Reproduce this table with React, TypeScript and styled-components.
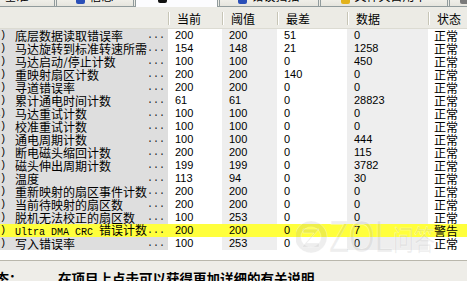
import React from "react";
import styled, { createGlobalStyle, css } from "styled-components";

const CJK = `"Noto Sans CJK SC", "Noto Sans", sans-serif`;
const NUM = `"Liberation Sans", Arial, sans-serif`;
const MONO = `"Liberation Mono", "DejaVu Sans Mono", monospace`;

const GlobalStyle = createGlobalStyle`
  html, body { margin: 0; padding: 0; background: #ffffff; overflow: hidden; }
  body { width: 467px; height: 281px; }
`;

const Viewport = styled.div`
  width: 467px;
  height: 281px;
  overflow: hidden;
`;

const Window = styled.div`
  position: relative;
  margin: -12px 0 0 -24px;
  width: 491px;
  height: 293px;
  display: flex;
  flex-direction: column;
  background: #ffffff;
`;

const TabBar = styled.div`
  display: flex;
  align-items: flex-end;
  gap: 1px;
  height: 18px;
  padding-left: 2px;
  background: #ecebe5;
`;

const Tab = styled.div<{ $w: number; $active?: boolean }>`
  box-sizing: border-box;
  flex: none;
  width: ${(p) => p.$w}px;
  height: 18px;
  display: flex;
  align-items: flex-start;
  justify-content: center;
  gap: 4px;
  border: 1px solid #919b9c;
  border-bottom: none;
  border-radius: 3px 3px 0 0;
  background: linear-gradient(#ffffff, #f1f0ea 60%, #e6e5de);
  font: 12px/14px ${CJK};
  color: #000;
  padding-top: 0;
  ${(p) =>
    p.$active &&
    css`
      height: 20px;
      margin-bottom: -1px;
      position: relative;
      z-index: 1;
      background: #fcfcfe;
      & > span:last-child {
        visibility: hidden;
      }
    `}
`;

const TabIcon = styled.span<{ $c: string }>`
  display: inline-block;
  width: 9px;
  height: 15px;
  border-radius: 2px;
  background: ${(p) => p.$c};
`;

const Strip = styled.div`
  height: 2px;
  border-top: 1px solid #919b9c;
  background: #ecebe5;
`;

const Header = styled.div`
  box-sizing: border-box;
  display: flex;
  height: 20px;
  background: #ecebe5;
  border-bottom: 1px solid #dcdbd2;
`;

const HeaderCell = styled.div<{ $w: number; $first?: boolean }>`
  position: relative;
  box-sizing: border-box;
  flex: none;
  width: ${(p) => p.$w}px;
  padding-left: 9px;
  font: 12px/19px ${CJK};
  color: #000;
  ${(p) =>
    !p.$first &&
    css`
      &::before {
        content: "";
        position: absolute;
        left: 0;
        top: 3px;
        bottom: 3px;
        width: 1px;
        background: #c7c5b6;
        box-shadow: 1px 0 0 #ffffff;
      }
    `}
`;

const Rows = styled.div`
  flex: 1;
  display: flex;
  flex-direction: column;
  background: #ffffff;
`;

const Row = styled.div<{ $warn?: boolean }>`
  display: flex;
  height: 13px;
  background: ${(p) => (p.$warn ? "#ffff3c" : "transparent")};
`;

type Tone = "dark" | "light" | "none";
const toneColor: Record<Tone, string> = {
  dark: "#dedede",
  light: "#eeeeee",
  none: "transparent",
};

const NameCell = styled.div<{ $w: number; $tone: Tone }>`
  box-sizing: border-box;
  flex: none;
  width: ${(p) => p.$w}px;
  display: flex;
  align-items: center;
  padding: 0 3px 0 6px;
  background: ${(p) => toneColor[p.$tone]};
  overflow: hidden;
`;

const Id = styled.span`
  flex: none;
  width: 24px;
  margin-right: 9px;
  font: 10px/13px ${MONO};
  color: #000;
`;

const Name = styled.span`
  flex: 1;
  min-width: 0;
  overflow: hidden;
  white-space: nowrap;
  font: 12px/13px ${CJK};
  color: #000;
`;

const Latin = styled.span`
  font: 10px/13px ${MONO};
`;

const Dots = styled.span`
  flex: none;
  font: 10px/13px ${MONO};
  color: #222;
`;

const Cell = styled.div<{ $w: number; $tone: Tone; $cjk?: boolean }>`
  box-sizing: border-box;
  flex: none;
  width: ${(p) => p.$w}px;
  padding-left: ${(p) => (p.$cjk ? 6 : 7)}px;
  background: ${(p) => toneColor[p.$tone]};
  font: ${(p) => (p.$cjk ? `12px/13px ${CJK}` : `11px/13px ${NUM}`)};
  color: #000;
  white-space: nowrap;
  overflow: hidden;
`;

const StatusBar = styled.div`
  box-sizing: border-box;
  flex: none;
  height: 21px;
  display: flex;
  padding: 9px 0 0 6px;
  border-top: 1px solid #b9b7ac;
  background: #eeede8;
  font: bold 13.5px/16px ${CJK};
  color: #000;
  white-space: nowrap;
`;

const StatusLabel = styled.span`
  flex: none;
  width: 76px;
`;

const Watermark = styled.svg`
  position: absolute;
  left: 320px;
  top: 229px;
  pointer-events: none;
`;

const COLS = [192, 54, 55, 70, 81, 39];
const TONES: Tone[] = ["dark", "none", "light", "none", "light", "none"];

type Attr = {
  id: string;
  name: React.ReactNode;
  cur: string;
  thr: string;
  worst: string;
  data: string;
  status: string;
  warn?: boolean;
};

const ROWS: Attr[] = [
  { id: "(01)", name: "底层数据读取错误率", cur: "200", thr: "200", worst: "51", data: "0", status: "正常" },
  { id: "(03)", name: "马达旋转到标准转速所需时间", cur: "154", thr: "148", worst: "21", data: "1258", status: "正常" },
  { id: "(04)", name: "马达启动/停止计数", cur: "100", thr: "100", worst: "0", data: "450", status: "正常" },
  { id: "(05)", name: "重映射扇区计数", cur: "200", thr: "200", worst: "140", data: "0", status: "正常" },
  { id: "(07)", name: "寻道错误率", cur: "200", thr: "200", worst: "0", data: "0", status: "正常" },
  { id: "(09)", name: "累计通电时间计数", cur: "61", thr: "61", worst: "0", data: "28823", status: "正常" },
  { id: "(0A)", name: "马达重试计数", cur: "100", thr: "100", worst: "0", data: "0", status: "正常" },
  { id: "(0B)", name: "校准重试计数", cur: "100", thr: "100", worst: "0", data: "0", status: "正常" },
  { id: "(0C)", name: "通电周期计数", cur: "100", thr: "100", worst: "0", data: "444", status: "正常" },
  { id: "(C0)", name: "断电磁头缩回计数", cur: "200", thr: "200", worst: "0", data: "115", status: "正常" },
  { id: "(C1)", name: "磁头伸出周期计数", cur: "199", thr: "199", worst: "0", data: "3782", status: "正常" },
  { id: "(C2)", name: "温度", cur: "113", thr: "94", worst: "0", data: "30", status: "正常" },
  { id: "(C4)", name: "重新映射的扇区事件计数", cur: "200", thr: "200", worst: "0", data: "0", status: "正常" },
  { id: "(C5)", name: "当前待映射的扇区数", cur: "200", thr: "200", worst: "0", data: "0", status: "正常" },
  { id: "(C6)", name: "脱机无法校正的扇区数", cur: "100", thr: "253", worst: "0", data: "0", status: "正常" },
  {
    id: "(C7)",
    name: (
      <>
        <Latin>Ultra DMA CRC </Latin>错误计数
      </>
    ),
    cur: "200",
    thr: "200",
    worst: "0",
    data: "7",
    status: "警告",
    warn: true,
  },
  { id: "(C8)", name: "写入错误率", cur: "100", thr: "253", worst: "0", data: "0", status: "正常" },
];

const TABS = [
  { w: 77, label: "基准", icon: "" },
  { w: 78, label: "信息", icon: "#2a4fb8" },
  { w: 83, label: "健康", icon: "#111111", active: true },
  { w: 100, label: "错误扫描", icon: "#2a4fb8" },
  { w: 128, label: "文件夹占用率", icon: "#e2b21c" },
  { w: 60, label: "磁盘", icon: "#7a7a7a" },
];

export default function App() {
  return (
    <Viewport>
      <GlobalStyle />
      <Window>
        <TabBar>
          {TABS.map((t) => (
            <Tab key={t.label} $w={t.w} $active={t.active}>
              {t.icon && <TabIcon $c={t.icon} />}
              <span>{t.label}</span>
            </Tab>
          ))}
        </TabBar>
        <Strip />
        <Header>
          <HeaderCell $w={COLS[0]} $first />
          <HeaderCell $w={COLS[1]}>当前</HeaderCell>
          <HeaderCell $w={COLS[2]}>阈值</HeaderCell>
          <HeaderCell $w={COLS[3]}>最差</HeaderCell>
          <HeaderCell $w={COLS[4]}>数据</HeaderCell>
          <HeaderCell $w={COLS[5]}>状态</HeaderCell>
        </Header>
        <Rows>
          {ROWS.map((r) => {
            const t = (i: number): Tone => (r.warn ? "none" : TONES[i]);
            return (
              <Row key={r.id} $warn={r.warn}>
                <NameCell $w={COLS[0]} $tone={t(0)}>
                  <Id>{r.id}</Id>
                  <Name>{r.name}</Name>
                  <Dots>...</Dots>
                </NameCell>
                <Cell $w={COLS[1]} $tone={t(1)}>{r.cur}</Cell>
                <Cell $w={COLS[2]} $tone={t(2)}>{r.thr}</Cell>
                <Cell $w={COLS[3]} $tone={t(3)}>{r.worst}</Cell>
                <Cell $w={COLS[4]} $tone={t(4)}>{r.data}</Cell>
                <Cell $w={COLS[5]} $tone={t(5)} $cjk>{r.status}</Cell>
              </Row>
            );
          })}
        </Rows>
        <StatusBar>
          <StatusLabel>状态：</StatusLabel>
          <span>在项目上点击可以获得更加详细的有关说明</span>
        </StatusBar>
        <Watermark width="140" height="42" viewBox="0 0 140 42">
          <g fill="rgba(150,150,150,0.16)" stroke="rgba(255,255,255,0.5)" strokeWidth="0.6">
            <path d="M15 4 a16 16 0 1 0 0.1 0 Z M15 10 a10 10 0 1 1 -0.1 0 Z" fillRule="evenodd" />
            <path d="M7 12 h16 l-12 14 h12 v4 h-17 l12 -14 h-11 Z" />
            <text x="33" y="35" fontFamily={NUM} fontSize="44" textLength="64" lengthAdjust="spacingAndGlyphs">
              ZOL
            </text>
            <text x="97" y="34" fontFamily={CJK} fontSize="28" textLength="42" lengthAdjust="spacingAndGlyphs">
              问答
            </text>
          </g>
        </Watermark>
      </Window>
    </Viewport>
  );
}
